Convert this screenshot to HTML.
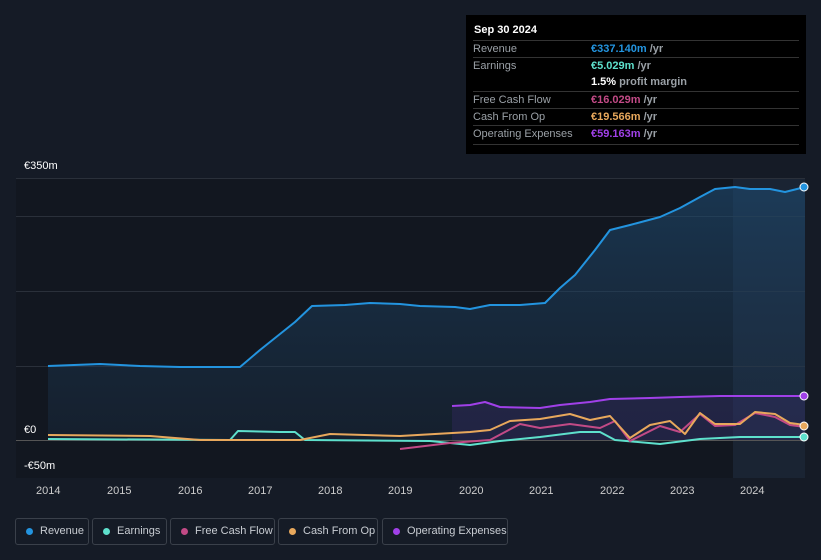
<!DOCTYPE html><html><head><style>
html,body{margin:0;width:821px;height:560px;overflow:hidden}
body{background:#151b26;font-family:"Liberation Sans",sans-serif;position:relative}
.tt{position:absolute;left:466px;top:15px;width:340px;height:139px;background:#000;color:#fff;font-size:11px}
.tt .h{position:absolute;left:8px;top:9px;font-weight:bold;font-size:11px}
.row{position:absolute;left:7px;width:326px;height:17px;border-top:1px solid #333;line-height:17px;color:#9aa0a6}
.row span{position:absolute;left:118px;font-weight:bold}
.row i{font-style:normal;color:#9aa0a6;font-weight:bold}
.leg{position:absolute;top:518px;height:27px;border:1px solid #3a404a;border-radius:3px;color:#c8ccd2;font-size:11px;line-height:25px;box-sizing:border-box;white-space:nowrap}
.leg b{position:absolute;left:10px;top:9px;width:7px;height:7px;border-radius:50%}
.leg span{position:absolute;left:24px}
.ax{position:absolute;color:#fff;font-size:11px}
</style></head><body>
<svg width="821" height="500" style="position:absolute;left:0;top:0">
<defs><linearGradient id="g" x1="0" y1="0" x2="0" y2="1"><stop offset="0" stop-color="#1e4a70" stop-opacity=".6"/><stop offset="1" stop-color="#1e3a56" stop-opacity=".25"/></linearGradient></defs>
<rect x="16" y="178" width="789" height="300" fill="#121720"/>
<rect x="733" y="178" width="72" height="300" fill="#1a2433"/>
<g stroke="#2a303a" stroke-width="1"><line x1="16" y1="178.5" x2="805" y2="178.5"/><line x1="16" y1="216.5" x2="805" y2="216.5"/><line x1="16" y1="291.5" x2="805" y2="291.5"/><line x1="16" y1="366.5" x2="805" y2="366.5"/><line x1="16" y1="440.5" x2="805" y2="440.5" stroke="#555"/></g>
<path d="M48,366 L100,364 L140,366 L180,367 L240,367 L260,350 L295,322 L312,306 L345,305 L370,303 L400,304 L420,306 L455,307 L470,309 L490,305 L520,305 L545,303 L560,288 L575,275 L595,250 L610,230 L630,225 L660,217 L680,208 L700,197 L715,189 L735,187 L750,189 L770,189 L785,192 L805,187 L805,440 L48,440Z" fill="url(#g)"/>
<path d="M452,406 L470,405 L485,402 L500,407 L540,408 L560,405 L590,402 L610,399 L650,398 L680,397 L720,396 L760,396 L805,396 L805,440 L452,440Z" fill="#3a2a6a" opacity=".35"/>
<g fill="none" stroke-width="2" stroke-linejoin="round">
<path stroke="#2394df" d="M48,366 L100,364 L140,366 L180,367 L240,367 L260,350 L295,322 L312,306 L345,305 L370,303 L400,304 L420,306 L455,307 L470,309 L490,305 L520,305 L545,303 L560,288 L575,275 L595,250 L610,230 L630,225 L660,217 L680,208 L700,197 L715,189 L735,187 L750,189 L770,189 L785,192 L805,187"/>
<path stroke="#a040e8" d="M452,406 L470,405 L485,402 L500,407 L540,408 L560,405 L590,402 L610,399 L650,398 L680,397 L720,396 L760,396 L805,396"/>
<path stroke="#5ee0cc" d="M48,439 L230,440 L238,431 L280,432 L295,432 L305,440 L430,441 L470,445 L500,441 L540,437 L580,432 L600,432 L615,440 L660,444 L700,439 L740,437 L805,437"/>
<path stroke="#c24a86" d="M400,449 L450,443 L490,440 L520,424 L540,428 L570,424 L600,428 L615,421 L630,441 L660,426 L680,432 L700,414 L715,426 L735,425 L755,413 L775,417 L790,425 L805,427"/>
<path stroke="#e8a85c" d="M48,435 L150,436 L200,440 L300,440 L330,434 L400,436 L470,432 L490,430 L510,421 L540,419 L570,414 L590,420 L610,416 L630,438 L650,425 L670,421 L685,434 L700,413 L715,424 L740,424 L755,412 L775,414 L790,423 L805,425"/>
</g>
<circle cx="804" cy="187" r="4" fill="#2394df" stroke="#fff"/>
<circle cx="804" cy="396" r="4" fill="#a040e8" stroke="#fff"/>
<circle cx="804" cy="426" r="4" fill="#e8a85c" stroke="#fff"/>
<circle cx="804" cy="437" r="4" fill="#5ee0cc" stroke="#fff"/>
</svg>
<div class="ax" style="left:24px;top:160px">€350m</div>
<div class="ax" style="left:24px;top:424px">€0</div>
<div class="ax" style="left:24px;top:460px">-€50m</div>
<div class="ax" style="left:36px;top:485px;color:#ccc">2014</div>
<div class="ax" style="left:107px;top:485px;color:#ccc">2015</div>
<div class="ax" style="left:178px;top:485px;color:#ccc">2016</div>
<div class="ax" style="left:248px;top:485px;color:#ccc">2017</div>
<div class="ax" style="left:318px;top:485px;color:#ccc">2018</div>
<div class="ax" style="left:388px;top:485px;color:#ccc">2019</div>
<div class="ax" style="left:459px;top:485px;color:#ccc">2020</div>
<div class="ax" style="left:529px;top:485px;color:#ccc">2021</div>
<div class="ax" style="left:600px;top:485px;color:#ccc">2022</div>
<div class="ax" style="left:670px;top:485px;color:#ccc">2023</div>
<div class="ax" style="left:740px;top:485px;color:#ccc">2024</div>
<div class="tt"><div class="h">Sep 30 2024</div>
<div class="row" style="top:25px">Revenue<span style="color:#2394df">€337.140m <i>/yr</i></span></div>
<div class="row" style="top:42px">Earnings<span style="color:#5ee0cc">€5.029m <i>/yr</i></span></div>
<div class="row" style="top:59px;border-top:none"><span style="color:#fff">1.5% <i>profit margin</i></span></div>
<div class="row" style="top:76px">Free Cash Flow<span style="color:#c24a86">€16.029m <i>/yr</i></span></div>
<div class="row" style="top:93px">Cash From Op<span style="color:#e8a85c">€19.566m <i>/yr</i></span></div>
<div class="row" style="top:110px">Operating Expenses<span style="color:#a040e8">€59.163m <i>/yr</i></span></div>
<div class="row" style="top:129px;height:0"></div>
</div>
<div class="leg" style="left:15px;width:74px"><b style="background:#2394df"></b><span>Revenue</span></div>
<div class="leg" style="left:92px;width:75px"><b style="background:#5ee0cc"></b><span>Earnings</span></div>
<div class="leg" style="left:170px;width:105px"><b style="background:#c24a86"></b><span>Free Cash Flow</span></div>
<div class="leg" style="left:278px;width:100px"><b style="background:#e8a85c"></b><span>Cash From Op</span></div>
<div class="leg" style="left:382px;width:126px"><b style="background:#a040e8"></b><span>Operating Expenses</span></div>
</body></html>
